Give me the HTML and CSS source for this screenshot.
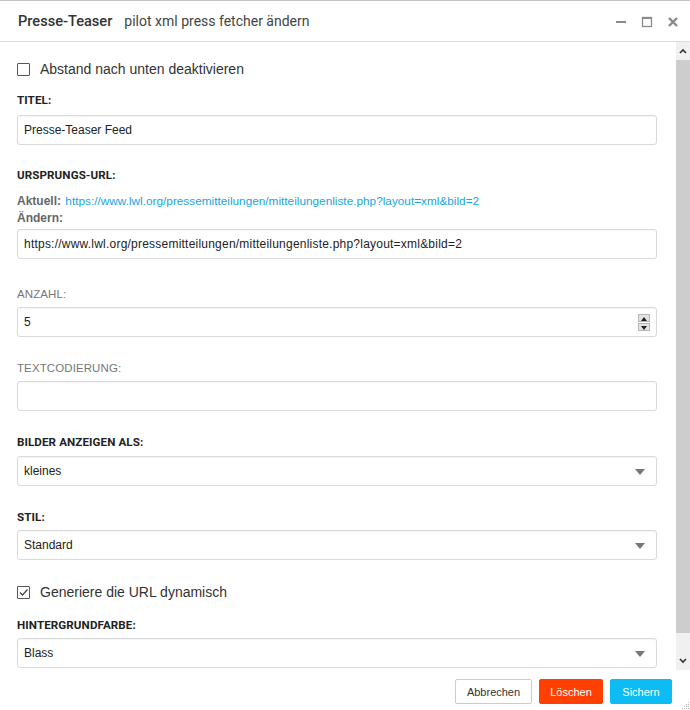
FILE: index.html
```html
<!DOCTYPE html>
<html lang="de">
<head>
<meta charset="utf-8">
<title>Presse-Teaser</title>
<link rel="stylesheet" href="styles.css">
</head>
<body>
<div class="dialog">
  <header class="head">
    <div class="title"><span class="t-main">Presse-Teaser</span><span class="t-sub">pilot xml press fetcher ändern</span></div>
    <div class="win-ctrl">
      <svg class="ic" width="12" height="12" viewBox="0 0 12 12"><rect x="1" y="5" width="10" height="2" fill="#8a8a8a"/></svg>
      <svg class="ic" width="12" height="12" viewBox="0 0 12 12"><rect x="1.5" y="1.5" width="9" height="9" fill="none" stroke="#8a8a8a" stroke-width="1.3"/><rect x="1" y="1" width="10" height="2" fill="#8a8a8a"/></svg>
      <svg class="ic" width="12" height="12" viewBox="0 0 12 12"><path d="M2 2 L10 10 M10 2 L2 10" stroke="#8a8a8a" stroke-width="2.4"/></svg>
    </div>
  </header>
  <div class="main">
    <div class="content">
      <div class="check-row first">
        <span class="cb"></span><span class="cb-label">Abstand nach unten deaktivieren</span>
      </div>

      <div class="lbl g1">TITEL:</div>
      <div class="inp m8">Presse-Teaser Feed</div>

      <div class="lbl g2">URSPRUNGS-URL:</div>
      <div class="url-info">
        <div><b>Aktuell:</b> <a class="link">https://www.lwl.org/pressemitteilungen/mitteilungenliste.php?layout=xml&amp;bild=2</a></div>
        <div><b>Ändern:</b></div>
      </div>
      <div class="inp url m3">https://www.lwl.org/pressemitteilungen/mitteilungenliste.php?layout=xml&amp;bild=2</div>

      <div class="lbl light g3">ANZAHL:</div>
      <div class="inp m6">5
        <span class="spinner"><span class="sp up"></span><span class="sp down"></span></span>
      </div>

      <div class="lbl light g4">TEXTCODIERUNG:</div>
      <div class="inp m6"></div>

      <div class="lbl g4">BILDER ANZEIGEN ALS:</div>
      <div class="inp sel m7">kleines<span class="caret"></span></div>

      <div class="lbl g4">STIL:</div>
      <div class="inp sel m6">Standard<span class="caret"></span></div>

      <div class="check-row g4">
        <span class="cb checked"><svg width="11" height="11" viewBox="0 0 11 11"><path d="M2 5.5 L4.5 8 L9.5 2.5" fill="none" stroke="#444" stroke-width="1.3"/></svg></span><span class="cb-label">Generiere die URL dynamisch</span>
      </div>

      <div class="lbl g5">HINTERGRUNDFARBE:</div>
      <div class="inp sel m6">Blass<span class="caret"></span></div>
    </div>
    <div class="scrollbar">
      <div class="sb-btn"><svg width="8" height="6" viewBox="0 0 8 6"><path d="M1 5 L4 2 L7 5" fill="none" stroke="#333" stroke-width="1.6"/></svg></div>
      <div class="sb-thumb"></div>
      <div class="sb-track"></div>
      <div class="sb-btn"><svg width="8" height="6" viewBox="0 0 8 6"><path d="M1 1 L4 4 L7 1" fill="none" stroke="#333" stroke-width="1.6"/></svg></div>
    </div>
  </div>
  <footer class="foot">
    <button class="btn cancel">Abbrechen</button>
    <button class="btn del">Löschen</button>
    <button class="btn save">Sichern</button>
    <svg class="grip" width="10" height="10" viewBox="0 0 10 10">
      <g fill="#bbb"><rect x="8" y="2" width="1" height="1"/><rect x="6" y="4" width="1" height="1"/><rect x="8" y="4" width="1" height="1"/><rect x="4" y="6" width="1" height="1"/><rect x="6" y="6" width="1" height="1"/><rect x="8" y="6" width="1" height="1"/><rect x="2" y="8" width="1" height="1"/><rect x="4" y="8" width="1" height="1"/><rect x="6" y="8" width="1" height="1"/><rect x="8" y="8" width="1" height="1"/></g>
    </svg>
  </footer>
</div>
</body>
</html>
```

FILE: styles.css
```css
* { box-sizing: border-box; }
html, body { margin: 0; padding: 0; background: #fff; }
body { font-family: "Liberation Sans", Arial, sans-serif; color: #333; }

.dialog {
  width: 690px;
  height: 710px;
  border-top: 1px solid #c4c4c4;
  display: flex;
  flex-direction: column;
  background: #fff;
  position: relative;
}

.head {
  height: 41px;
  flex: none;
  border-bottom: 1px solid #dcdcdc;
  display: flex;
  align-items: center;
  justify-content: space-between;
  padding: 0 11px 0 18px;
}
.title { display: flex; align-items: baseline; }
.t-main { font-family: Roboto, "Liberation Sans", sans-serif; font-size: 14.6px; font-weight: 500; color: #333; }
.t-sub { font-family: Roboto, "Liberation Sans", sans-serif; font-size: 14px; color: #444; margin-left: 12px; }
.win-ctrl { display: flex; gap: 14px; align-items: center; margin-top: 1px; }
.ic { display: block; }

.main { height: 628px; flex: none; display: flex; }
.content { flex: 1; padding: 0 19px 0 17px; }

.scrollbar { width: 14px; flex: none; display: flex; flex-direction: column; background: #f0f0f0; height: 628px; }
.sb-btn { height: 18px; display: flex; align-items: center; justify-content: center; background: #f0f0f0; }
.sb-thumb { height: 573px; background: #cdcdcd; }
.sb-track { flex: 1; }

.check-row { display: flex; align-items: center; height: 16px; }
.check-row.first { margin-top: 19px; }
.cb { width: 13px; height: 13px; border: 1px solid #555; border-radius: 1px; display: inline-flex; align-items: center; justify-content: center; background: #fff; flex: none; }
.cb svg { display: block; }
.cb-label { margin-left: 10px; font-size: 14px; color: #333; }

.lbl { font-family: Roboto, "Liberation Sans", sans-serif; font-size: 11.6px; line-height: 14px; height: 14px; font-weight: 700; color: #222; letter-spacing: 0.1px; }
.lbl.light { font-weight: 400; color: #777; font-family: "Liberation Sans", Arial, sans-serif; font-size: 11.5px; }

.g1 { margin-top: 16px; }
.g2 { margin-top: 23px; }
.g3 { margin-top: 28px; }
.g4 { margin-top: 24px; }
.g5 { margin-top: 18px; }
.m3 { margin-top: 2px; }
.m6 { margin-top: 6px; }
.m7 { margin-top: 7px; }
.m8 { margin-top: 8px; }

.url-info { margin-top: 11px; font-size: 12px; line-height: 17px; color: #666; }
.url-info b { color: #666; }
.link { color: #1aa5e0; text-decoration: none; font-size: 11.8px; margin-left: 1px; }

.inp {
  height: 30px;
  border: 1px solid #dadada;
  border-radius: 3px;
  padding: 0 6px;
  font-size: 12px;
  line-height: 28px;
  color: #222;
  background: #fff;
  box-shadow: inset 0 1px 1px rgba(0,0,0,0.04);
  position: relative;
}
.inp.url { letter-spacing: 0.22px; }
.sel .caret {
  position: absolute;
  right: 11px;
  top: 12px;
  width: 0; height: 0;
  border-left: 5px solid transparent;
  border-right: 5px solid transparent;
  border-top: 6px solid #777;
}
.spinner {
  position: absolute;
  right: 6px;
  top: 6px;
  width: 12px;
  height: 17px;
  display: flex;
  flex-direction: column;
  gap: 1px;
}
.sp { flex: 1; background: #e4e4e4; border: 1px solid #b5b5b5; position: relative; }
.sp.up::after, .sp.down::after {
  content: ""; position: absolute; left: 2px; top: 2px;
  border-left: 3px solid transparent; border-right: 3px solid transparent;
}
.sp.up::after { border-bottom: 4px solid #222; }
.sp.down::after { border-top: 4px solid #222; top: 2px; }

.foot {
  flex: 1;
  display: flex;
  justify-content: flex-end;
  align-items: flex-start;
  gap: 7px;
  padding: 9px 18px 0 0;
  position: relative;
}
.btn {
  height: 25px;
  border-radius: 2px;
  font-family: "Liberation Sans", Arial, sans-serif;
  font-size: 11px;
  border: 1px solid transparent;
  padding: 0;
  cursor: pointer;
}
.btn.cancel { width: 77px; background: #fff; border-color: #ccc; color: #333; }
.btn.del { width: 64px; background: #ff4000; border-color: #ff4000; color: #fff; }
.btn.save { width: 62px; background: #0dbbf5; border-color: #0dbbf5; color: #fff; }
.grip { position: absolute; right: 0; bottom: 0; }
```
